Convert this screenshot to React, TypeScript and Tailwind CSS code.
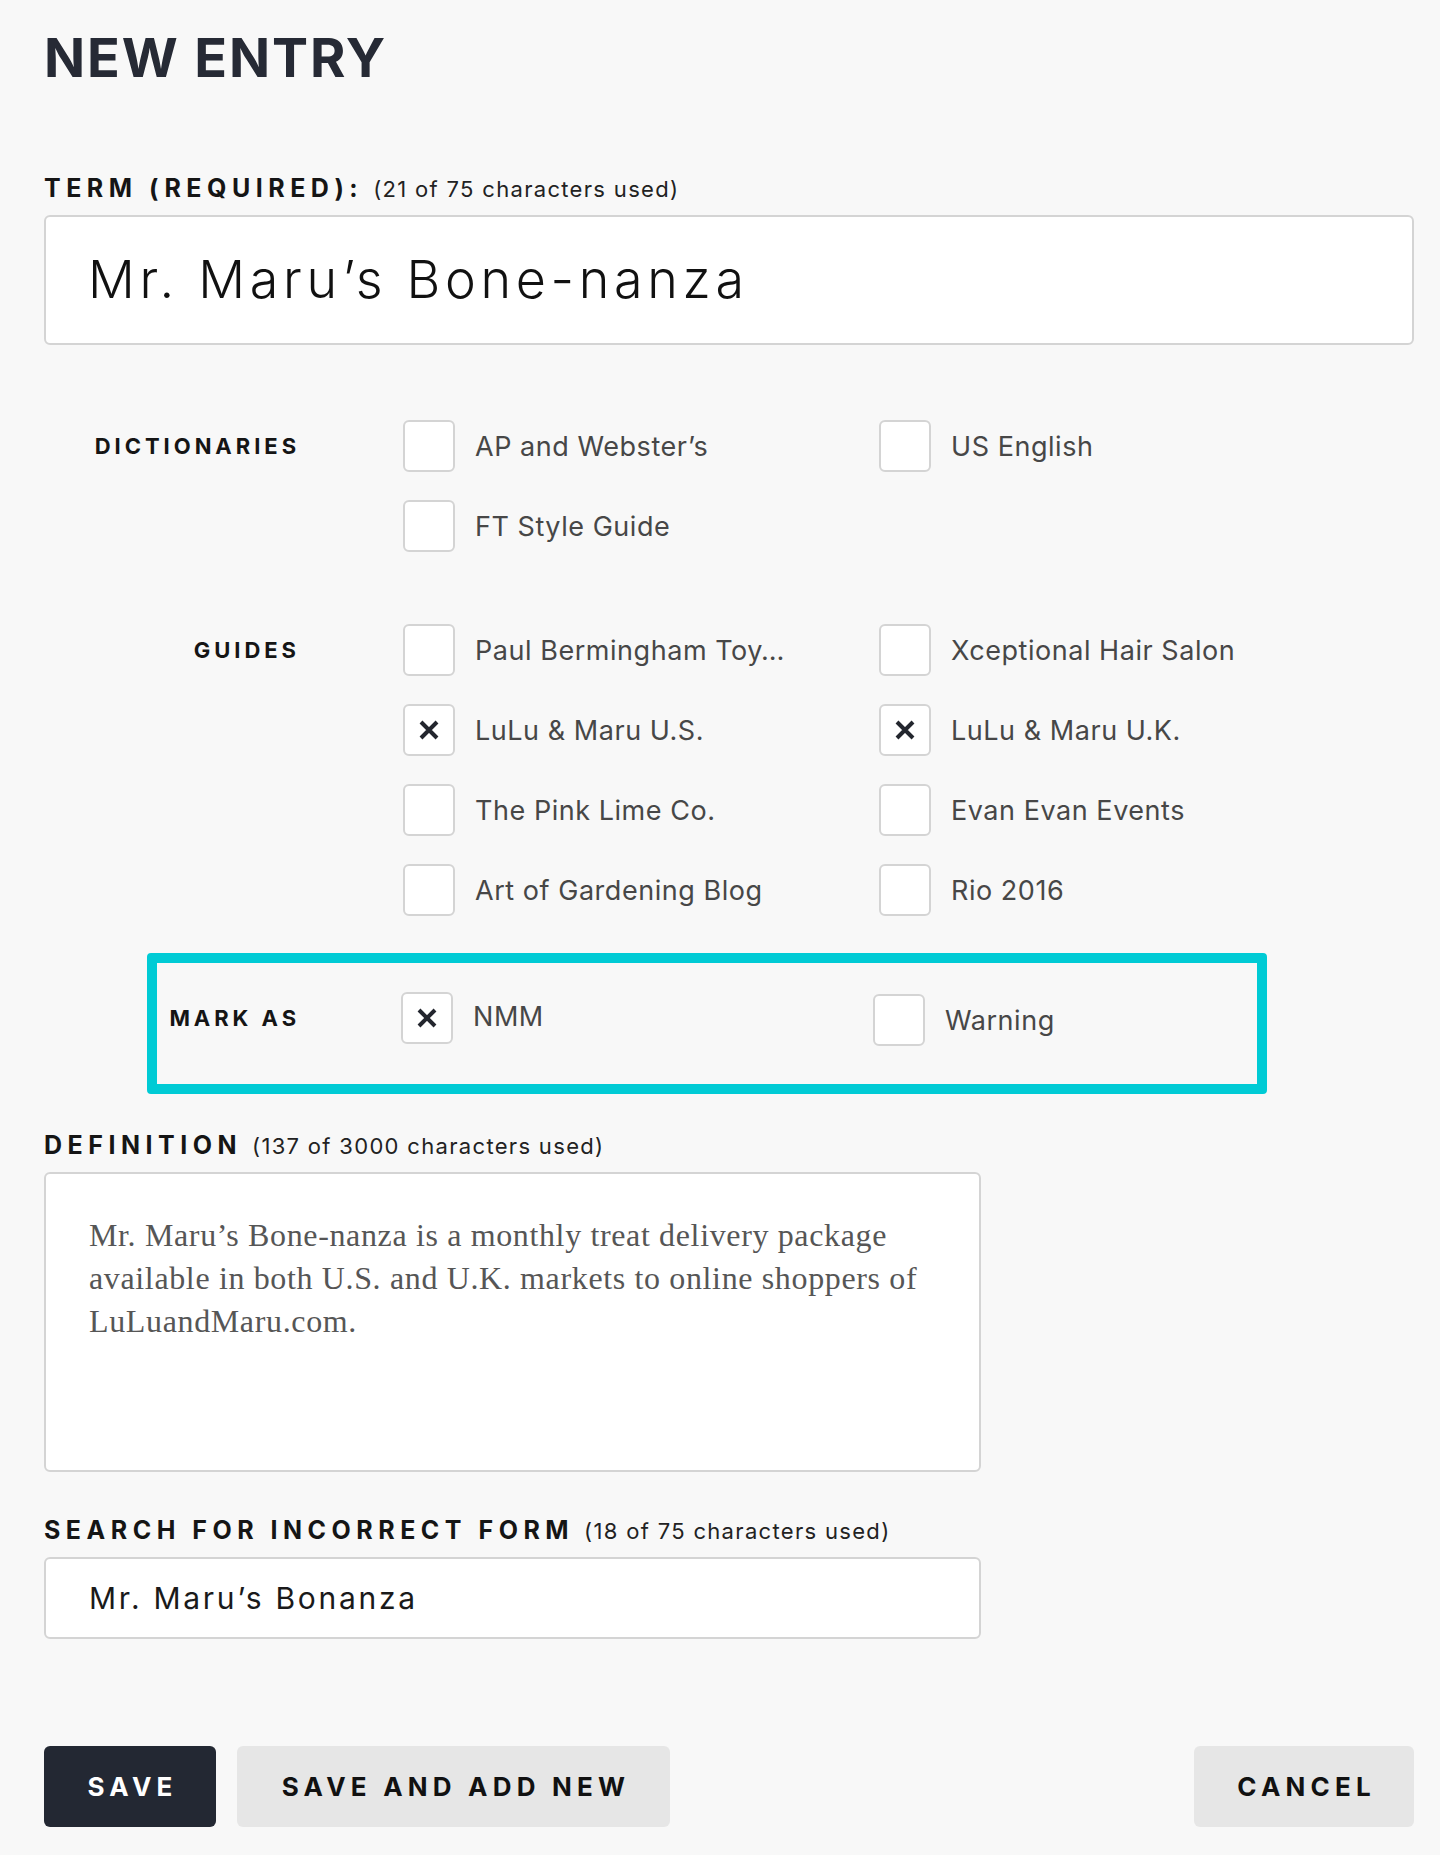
import React from "react";

const SANS = "font-['Inter','Liberation_Sans',sans-serif]";

function Box({ checked }: { checked?: boolean }) {
  return (
    <div className="w-[52px] h-[52px] shrink-0 rounded-[6px] border-2 border-[#d4d4d4] bg-white flex items-center justify-center">
      {checked && (
        <svg width="20" height="20" viewBox="0 0 20 20" aria-hidden="true">
          <path d="M2 2 L18 18 M18 2 L2 18" stroke="#23262e" strokeWidth="4" strokeLinecap="butt" />
        </svg>
      )}
    </div>
  );
}

function Option({ label, checked }: { label: string; checked?: boolean }) {
  return (
    <div className="flex items-center gap-[20px] h-[52px]">
      <Box checked={checked} />
      <span className="text-[27px] leading-none tracking-[0.02em] text-[#474747] whitespace-nowrap">{label}</span>
    </div>
  );
}

function Group({ title, items, className }: { title: string; items: { label: string; checked?: boolean }[]; className?: string }) {
  return (
    <div className={"flex " + (className ?? "")}>
      <div className="w-[256px] shrink-0 h-[52px] flex items-center justify-end">
        <span className="text-[22px] leading-none font-bold tracking-[0.18em] text-[#151515]">{title}</span>
      </div>
      <div className="ml-[103px] grid grid-cols-[476px_476px] gap-y-[28px]">
        {items.map((it) => (
          <Option key={it.label} label={it.label} checked={it.checked} />
        ))}
      </div>
    </div>
  );
}

function SectionLabel({ title, counter }: { title: string; counter: string }) {
  return (
    <div className="flex items-baseline h-[24px]">
      <span className="text-[25px] leading-[24px] font-bold tracking-[0.22em] text-[#151515]">{title}</span>
      <span className="ml-[10px] text-[22px] leading-[24px] tracking-[0.06em] text-[#222]">{counter}</span>
    </div>
  );
}

export default function App() {
  return (
    <div className={"min-h-[1855px] w-[1440px] bg-[#f8f8f8] pl-[44px] pr-[26px] pt-[31px] pb-[29px] " + SANS}>
      <h1 className="text-[54px] leading-[54px] font-bold tracking-[0.035em] text-[#262a35]">NEW ENTRY</h1>

      <div className="mt-[91px]">
        <SectionLabel title="TERM (REQUIRED):" counter="(21 of 75 characters used)" />
      </div>
      <div className="mt-[15px] h-[130px] w-full rounded-[6px] border-2 border-[#d4d4d4] bg-white flex items-center pl-[42px]">
        <span className="text-[52px] leading-none font-light tracking-[0.09em] text-[#111]">Mr. Maru’s Bone-nanza</span>
      </div>

      <Group
        className="mt-[75px]"
        title="DICTIONARIES"
        items={[{ label: "AP and Webster’s" }, { label: "US English" }, { label: "FT Style Guide" }]}
      />

      <Group
        className="mt-[72px]"
        title="GUIDES"
        items={[
          { label: "Paul Bermingham Toy…" },
          { label: "Xceptional Hair Salon" },
          { label: "LuLu & Maru U.S.", checked: true },
          { label: "LuLu & Maru U.K.", checked: true },
          { label: "The Pink Lime Co." },
          { label: "Evan Evan Events" },
          { label: "Art of Gardening Blog" },
          { label: "Rio 2016" },
        ]}
      />

      <div className="mt-[37px] ml-[103px] w-[1120px] rounded-[4px] border-[10px] border-[#00cbd5] flex pt-[29px] pb-[38px]">
        <div className="w-[143px] shrink-0 h-[52px] flex items-center justify-end">
          <span className="text-[22px] leading-none font-bold tracking-[0.18em] text-[#151515]">MARK AS</span>
        </div>
        <div className="ml-[101px] grid grid-cols-[472px_300px]">
          <div className="flex items-center gap-[20px] h-[52px]">
            <Box checked />
            <span className="text-[27px] leading-none tracking-[0.02em] text-[#474747] -mt-[4px]">NMM</span>
          </div>
          <div className="flex items-center gap-[20px] h-[52px] mt-[2px]">
            <Box />
            <span className="text-[27px] leading-none tracking-[0.02em] text-[#474747]">Warning</span>
          </div>
        </div>
      </div>

      <div className="mt-[39px]">
        <SectionLabel title="DEFINITION" counter="(137 of 3000 characters used)" />
      </div>
      <div className="mt-[15px] h-[300px] w-[937px] rounded-[6px] border-2 border-[#d4d4d4] bg-white pt-[40px] pl-[43px]">
        <div className="font-['Liberation_Serif','Times_New_Roman',serif] text-[32px] leading-[43px] tracking-[0.02em] text-[#565656]">
          <div>Mr. Maru’s Bone-nanza is a monthly treat delivery package</div>
          <div>available in both U.S. and U.K. markets to online shoppers of</div>
          <div>LuLuandMaru.com.</div>
        </div>
      </div>

      <div className="mt-[46px]">
        <SectionLabel title="SEARCH FOR INCORRECT FORM" counter="(18 of 75 characters used)" />
      </div>
      <div className="mt-[15px] h-[82px] w-[937px] rounded-[6px] border-2 border-[#d4d4d4] bg-white flex items-center pl-[43px]">
        <span className="text-[30px] leading-none tracking-[0.09em] text-[#1a1a1a]">Mr. Maru’s Bonanza</span>
      </div>

      <div className="mt-[107px] flex items-center justify-between">
        <div className="flex gap-[21px]">
          <button className="h-[81px] w-[172px] rounded-[6px] bg-[#232833] text-white text-[26px] font-bold tracking-[0.2em] pl-[5px]">
            SAVE
          </button>
          <button className="h-[81px] w-[433px] rounded-[6px] bg-[#e6e6e6] text-[#111] text-[26px] font-bold tracking-[0.2em] pl-[5px]">
            SAVE AND ADD NEW
          </button>
        </div>
        <button className="h-[81px] w-[220px] rounded-[6px] bg-[#e6e6e6] text-[#111] text-[26px] font-bold tracking-[0.2em] pl-[5px]">
          CANCEL
        </button>
      </div>
    </div>
  );
}
